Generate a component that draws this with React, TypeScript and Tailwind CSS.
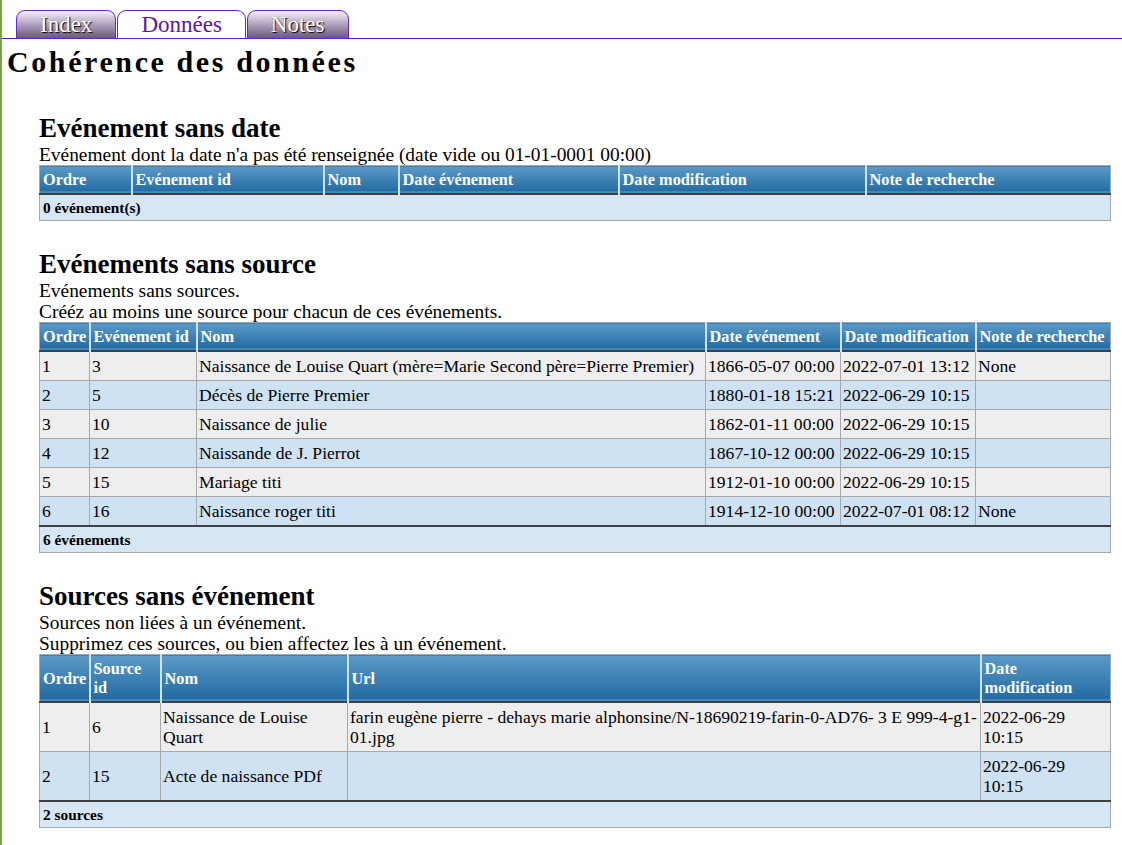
const tabs = [
  { name: "Index", active: false },
  { name: "Données", active: true },
  { name: "Notes", active: false },
];

const events = [
  ["1", "3", "Naissance de Louise Quart (mère=Marie Second père=Pierre Premier)", "1866-05-07 00:00", "2022-07-01 13:12", "None"],
  ["2", "5", "Décès de Pierre Premier", "1880-01-18 15:21", "2022-06-29 10:15", ""],
  ["3", "10", "Naissance de julie", "1862-01-11 00:00", "2022-06-29 10:15", ""],
  ["4", "12", "Naissande de J. Pierrot", "1867-10-12 00:00", "2022-06-29 10:15", ""],
  ["5", "15", "Mariage titi", "1912-01-10 00:00", "2022-06-29 10:15", ""],
  ["6", "16", "Naissance roger titi", "1914-12-10 00:00", "2022-07-01 08:12", "None"],
];

const sources = [
  ["1", "6", "Naissance de Louise Quart", "farin eugène pierre - dehays marie alphonsine/N-18690219-farin-0-AD76- 3 E 999-4-g1-01.jpg", "2022-06-29 10:15"],
  ["2", "15", "Acte de naissance PDf", "", "2022-06-29 10:15"],
];

type Col = { label: string; w: string };

function DataTable({ cols, rows, footer }: { cols: Col[]; rows: string[][]; footer: string }) {
  return (
    <table className="w-full table-fixed border-collapse border border-[#a8a8a8]">
      <thead>
        <tr className="border-b-2 border-[#404040]">
          {cols.map((c, i) => (
            <th
              key={c.label}
              className={`${c.w} bg-gradient-to-b from-[#5a9ac8] to-[#1d68a0] px-[3px] py-[4px] text-left align-middle text-[16.3px] leading-[19px] font-bold text-white shadow-[inset_0_-2px_0_#3f87bf] ${i > 0 ? "border-l-2 border-[#d2e2f0]" : ""}`}
            >
              {c.label}
            </th>
          ))}
        </tr>
      </thead>
      <tbody>
        {rows.map((r, ri) => (
          <tr key={ri} className={ri % 2 === 0 ? "bg-[#eeeeee]" : "bg-[#cfe2f3]"}>
            {r.map((v, ci) => (
              <td
                key={ci}
                className="border border-[#a8a8a8] px-[2px] py-[4px] align-middle text-[17.6px] leading-[20px] text-black"
              >
                {v}
              </td>
            ))}
          </tr>
        ))}
      </tbody>
      <tfoot>
        <tr className={rows.length ? "border-t-2 border-[#404040]" : ""}>
          <td colSpan={cols.length} className="bg-[#d6e6f5] px-[3px] py-[4px] text-[15.36px] leading-[17px] font-bold text-black">
            {footer}
          </td>
        </tr>
      </tfoot>
    </table>
  );
}

function Section({ title, lines, first, children }: { title: string; lines: string[]; first?: boolean; children: React.ReactNode }) {
  return (
    <section className={first ? "mt-[33px]" : "mt-[28px]"}>
      <h2 className="text-[27px] leading-[31px] font-bold text-black">{title}</h2>
      {lines.map((l) => (
        <p key={l} className="text-[19.4px] leading-[21px] text-black">
          {l}
        </p>
      ))}
      {children}
    </section>
  );
}

export default function App() {
  return (
    <div className="min-h-[845px] border-l-2 border-[#7aa24c] bg-white font-['Liberation_Serif',serif]">
      <div className="flex items-end border-b border-[#5f10bf] pt-[10px] pl-[14px]">
        {tabs.map((t) => (
          <div
            key={t.name}
            className={`-mb-px mr-[1px] rounded-t-[9px] border border-[#6a24c4] px-[23px] text-[23px] leading-[27px] ${
              t.active
                ? "bg-white text-[#5a16b4]"
                : "bg-gradient-to-b from-[#f7f1fa] to-[#6c5880] text-white [text-shadow:1px_1px_1px_#000]"
            }`}
          >
            {t.name}
          </div>
        ))}
      </div>

      <h1 className="mt-[5px] ml-[5px] text-[30px] leading-[36px] font-bold tracking-[2.6px] text-black">
        Cohérence des données
      </h1>

      <div className="mr-[12px] ml-[37px] pb-[20px]">
        <Section first title="Evénement sans date" lines={["Evénement dont la date n'a pas été renseignée (date vide ou 01-01-0001 00:00)"]}>
          <DataTable
            cols={[
              { label: "Ordre", w: "w-[92px]" },
              { label: "Evénement id", w: "w-[192px]" },
              { label: "Nom", w: "w-[75px]" },
              { label: "Date événement", w: "w-[220px]" },
              { label: "Date modification", w: "w-[247px]" },
              { label: "Note de recherche", w: "w-[245px]" },
            ]}
            rows={[]}
            footer="0 événement(s)"
          />
        </Section>

        <Section title="Evénements sans source" lines={["Evénements sans sources.", "Crééz au moins une source pour chacun de ces événements."]}>
          <DataTable
            cols={[
              { label: "Ordre", w: "w-[50px]" },
              { label: "Evénement id", w: "w-[107px]" },
              { label: "Nom", w: "w-[509px]" },
              { label: "Date événement", w: "w-[135px]" },
              { label: "Date modification", w: "w-[135px]" },
              { label: "Note de recherche", w: "w-[135px]" },
            ]}
            rows={events}
            footer="6 événements"
          />
        </Section>

        <Section title="Sources sans événement" lines={["Sources non liées à un événement.", "Supprimez ces sources, ou bien affectez les à un événement."]}>
          <DataTable
            cols={[
              { label: "Ordre", w: "w-[50px]" },
              { label: "Source id", w: "w-[71px]" },
              { label: "Nom", w: "w-[187px]" },
              { label: "Url", w: "w-[633px]" },
              { label: "Date modification", w: "w-[130px]" },
            ]}
            rows={sources}
            footer="2 sources"
          />
        </Section>
      </div>
    </div>
  );
}
